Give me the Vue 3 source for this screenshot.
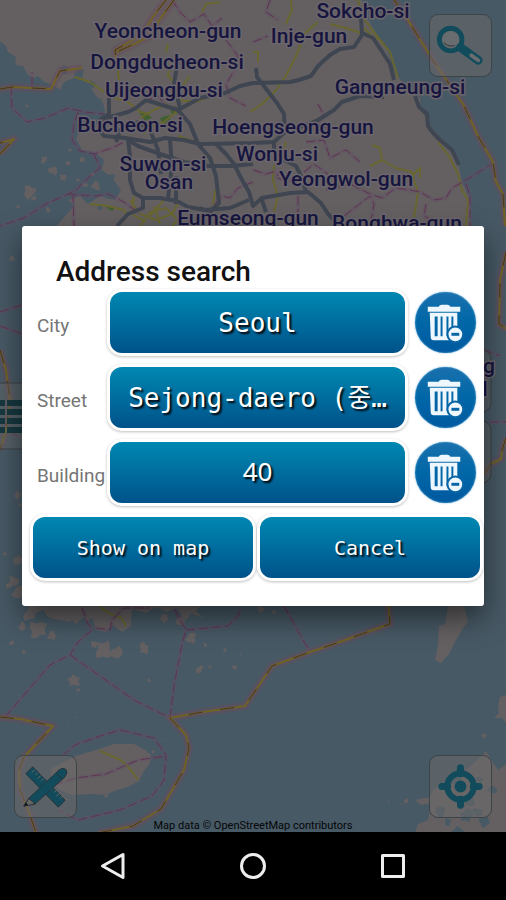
<script setup>
import { reactive } from 'vue'

const fields = reactive([
  { id: 'city', label: 'City', value: 'Seoul' },
  { id: 'street', label: 'Street', value: 'Sejong-daero (중…' },
  { id: 'building', label: 'Building', value: '40', numeric: true }
])

const places = [
  { name: 'Sokcho-si', x: 363, y: 18 },
  { name: 'Yeoncheon-gun', x: 168, y: 38 },
  { name: 'Inje-gun', x: 309, y: 43 },
  { name: 'Dongducheon-si', x: 167, y: 69 },
  { name: 'Uijeongbu-si', x: 164, y: 97 },
  { name: 'Gangneung-si', x: 400, y: 94 },
  { name: 'Bucheon-si', x: 130, y: 132 },
  { name: 'Hoengseong-gun', x: 293, y: 134 },
  { name: 'Wonju-si', x: 277, y: 161 },
  { name: 'Suwon-si', x: 163, y: 171 },
  { name: 'Osan', x: 169, y: 189 },
  { name: 'Yeongwol-gun', x: 346, y: 186 },
  { name: 'Eumseong-gun', x: 248, y: 225 },
  { name: 'Bonghwa-gun', x: 397, y: 230 },
  { name: 'g', x: 489, y: 373 },
  { name: 'l', x: 485, y: 396 }
]

const land = [
  'M0 0H362L367 18L378 36L388 52L395 74L408 88L420 98L421 110L432 128L446 145L458 162L462 182L470 200L470 240H45L60 222L75 205L68 200L80 196L88 204L100 196L115 200L121 190L112 178L102 170L104 160L94 152L82 150L76 139L82 126L97 124L106 116L103 103L96 96L90 86L82 78L84 70L76 68L74 78L64 82L60 90L52 84L44 82L38 76L33 78L27 74L23 66L15 65L16 57L8 52L6 46L0 41Z',
  'M24 600H205L196 611L203 618L190 613L182 616L177 608L166 612L156 607L146 613L132 609L131 626L122 632L113 625L105 632L96 629L92 618L86 622L84 610L76 614L70 622L58 620L48 617L43 610L34 614Z',
  'M52 768L76 756L99 749L114 744L134 744L145 750L151 755L150 763L144 771L139 781L128 787L114 791L106 795L92 794L72 795L60 790L50 782Z',
  'M448 606H464L468 622L463 628L456 640L449 654L441 663L435 660L438 644L439 626L445 624Z',
  'M506 695L500 697L498 706L499 713L494 718L502 718L506 723Z',
  'M506 764L498 770L490 758L486 751L480 757L472 765L462 773L460 783L443 785L434 789L430 797L415 800L421 805L431 803L428 820L418 824L415 833H450L458 826L466 833H506Z'
]

const rocks = [
  [30, 615, 7], [38, 630, 10], [22, 627, 5], [12, 643, 3], [24, 652, 2], [52, 636, 5], [104, 650, 10], [116, 652, 6], [94, 644, 4],
  [144, 648, 6], [165, 618, 5], [180, 622, 5], [191, 638, 6], [190, 612, 4], [186, 615, 6], [199, 670, 5], [210, 667, 2], [235, 668, 3],
  [225, 650, 2], [205, 645, 2], [241, 654, 1], [74, 681, 7], [78, 690, 2], [149, 680, 2], [77, 717, 1], [69, 726, 1], [165, 740, 1],
  [261, 609, 4], [274, 612, 2], [153, 752, 2], [66, 800, 2], [106, 796, 2], [389, 801, 1], [406, 801, 3], [484, 736, 3], [402, 804, 1],
  [27, 106, 2], [44, 160, 4], [53, 170, 5], [63, 177, 4], [68, 163, 3], [78, 180, 2], [30, 192, 7], [34, 198, 3], [85, 185, 3],
  [101, 143, 3], [82, 160, 3], [92, 175, 2], [96, 186, 5], [18, 207, 2], [48, 210, 3], [87, 137, 2], [70, 150, 2], [75, 210, 4],
  [12, 258, 3], [18, 495, 4], [20, 505, 2], [5, 554, 2], [17, 560, 5], [14, 582, 6], [19, 592, 7], [8, 586, 3], [78, 610, 12]
]

const waters = [[65, 70, 5], [92, 84, 4], [97, 101, 5], [110, 178, 5], [108, 192, 6], [88, 197, 5], [471, 803, 6], [461, 806, 4], [477, 812, 5], [466, 815, 7], [485, 822, 6], [493, 790, 5], [440, 812, 6], [448, 822, 4], [480, 780, 4], [100, 208, 3]]

const motorways = [
  'M109 98L109 114L100 120L110 117L128 112L136 108L146 100L178 110L200 98L225 93L240 86L253 83L290 82L299 80L311 76L318 66L330 55L340 49L354 47L362 35L361 18',
  'M362 33L373 38L383 53L390 64L394 80M415 96L419 107L427 114L428 126L434 134L440 140L452 150L459 165',
  'M256 68L257 77L267 90L277 103L284 114L285 132L274 142L253 143L200 144L184 140L165 138L150 142L125 138L104 136L99 130',
  'M285 132L298 128L318 120L334 110L342 102L360 96L384 97',
  'M178 110L190 124L198 144L210 158L216 176L219 203L210 212L200 208',
  'M216 144L226 154L234 164L241 178L249 192L253 206L262 198L290 193L308 192L321 203L328 214L336 222',
  'M253 164L232 166L208 166L184 162L160 154L138 146L128 140L130 156L130 180L134 193L143 198L143 208L128 214L117 226',
  'M143 198L160 198L177 201L188 207L205 210L230 208L249 200M170 140L172 166L168 198M161 174L158 150L150 130L138 122L120 130L116 142',
  'M274 140L274 150L284 160L296 166L302 178L306 192M178 60L174 84L180 108M262 200L266 212M176 176L176 204'
]

const byroads = [
  'M75 77L90 82L104 92M125 62L118 72L119 80M168 44L166 52M170 62L168 76L176 84M190 76L182 86M115 98L128 102L140 112L150 114M140 118L154 110L166 104L176 112L164 122L150 126L144 134M176 100L196 102L206 98M178 136L196 142L200 146M90 204L108 206L124 210L128 216',
  'M130 200L140 214L156 220L172 214L180 200M140 226L150 212L166 208L178 220L172 226M134 196L132 214L146 222M154 206L160 224M164 200L150 216',
  'M291 0L292 10L286 24M318 22L306 32L296 56L286 76L276 90L262 104L250 112M330 24L346 28L364 34L378 40M364 28L372 36M358 0L362 16L372 30L390 52L398 78',
  'M253 52L258 52L258 62M372 145L380 148L382 160L370 166M382 160L396 168L412 172L414 180L418 192L416 206L412 226M274 165L273 180L278 196L274 212M286 142L284 150M412 176L420 168L420 178M438 142L450 158L458 174L462 190L468 200L466 226M202 12L206 4L220 2M215 190L213 206',
  'M100 751L121 760L132 771L138 780M100 607L112 615L122 618L126 626'
]

const districts = [
  'M11 86L12 108L27 122L45 118L68 108L84 112L104 114M32 86L32 72M78 112L74 124L72 140L80 151L94 154L112 148L124 142',
  'M94 154L100 168L88 178L76 190L68 194L46 204L24 218L0 226M68 194L96 196L108 194L124 202L140 214M73 194L74 226',
  'M172 0L180 12L190 22L204 14L212 26L222 18M226 40L238 56L236 68L226 84L230 98L246 106M144 102L158 96L168 108',
  'M270 0L266 12L278 20M253 42L268 36M253 182L238 188L230 198L222 196L208 212M253 170L266 174L280 170L276 178L296 182M318 104L324 116L316 124L332 130M306 142L324 140L330 158L346 150L360 162M304 172L314 164L328 174',
  'M326 190L350 184L370 194L382 198L396 188L410 190L420 192L434 200L446 198L452 188L466 180L492 164M344 216L370 196L374 204L370 226M298 196L298 214M426 204L424 216L436 222M466 184L470 196L470 226',
  'M0 312L22 305M0 326L22 334M10 432L22 438M490 422L506 422M484 350L500 356',
  'M5 717L50 665L70 655L107 681L134 700L170 718M170 718L174 686L182 644L186 630L178 616L174 608M186 630L228 626L238 616L240 608M82 608L88 624L93 629L78 642L70 655M96 628L110 630L112 620L124 608L150 608',
  'M62 756L75 745L100 736L120 730L154 738L166 755L164 780L152 796L120 810L78 820L58 810M54 785L76 778L106 774L138 760L166 756M284 606L294 624L310 652'
]

const borders = [
  'M166 0L155 14L142 34L126 44L115 50L116 60M174 0L158 22L150 36L134 44L117 52M0 89L12 87L51 89L60 71L82 68',
  'M394 0L408 20L434 62L463 104L478 136L493 162L496 182L503 194L505 226',
  'M0 154L14 139L0 143',
  'M506 252L500 280L499 324L506 329M506 438L502 450L501 459L491 464L484 474',
  'M0 350L6 370L10 400L6 430L0 450',
  'M0 717L20 719L53 726L24 757L19 770L20 790L30 815L36 833',
  'M98 833L133 826L161 809L184 770L189 748L186 735L170 718L203 712L245 706L253 694L272 666L310 652L331 645L390 624L388 600'
]

// jagged outline round a centre, stable for the same input
function blob([cx, cy, r]) {
  const points = []
  for (let i = 0; i < 11; i++) {
    const noise = Math.abs(Math.sin(cx * 12.9 + cy * 78.2 + i * 37.7) * 43758.5) % 1
    const angle = (i / 11) * Math.PI * 2
    const radius = r * (0.5 + noise * 0.7)
    points.push(`${(cx + Math.cos(angle) * radius).toFixed(1)},${(cy + Math.sin(angle) * radius).toFixed(1)}`)
  }
  return points.join(' ')
}

function clearField(field) {
  field.value = ''
}
</script>

<template>
  <div class="screen">
    <main class="map">
      <svg class="map__canvas" viewBox="0 0 506 832" preserveAspectRatio="xMidYMid slice" aria-hidden="true">
        <rect class="map__sea" width="506" height="833" />
        <path v-for="(d, i) in land" :key="`land-${i}`" class="map__land" :d="d" />
        <polygon v-for="(rock, i) in rocks" :key="`rock-${i}`" class="map__land" :points="blob(rock)" />
        <polygon v-for="(water, i) in waters" :key="`water-${i}`" class="map__sea" :points="blob(water)" />
        <path class="map__park" d="M138 110l8 3 6 5-7 3zM160 118l9-3 2 6-8 4zM170 108l6-2 2 7-6 2zM105 207l10 1-3 3z" />
        <path v-for="(d, i) in byroads" :key="`byroad-${i}`" class="map__byroad" :d="d" />
        <g v-for="(d, i) in districts" :key="`district-${i}`">
          <path class="map__district-glow" :d="d" />
          <path class="map__district" :d="d" />
        </g>
        <path v-for="(d, i) in motorways" :key="`motorway-${i}`" class="map__motorway" :d="d" />
        <g v-for="(d, i) in borders" :key="`border-${i}`">
          <path class="map__border-glow" :d="d" />
          <path class="map__border" :d="d" />
          <path class="map__border-dash" :d="d" />
        </g>
        <g class="map__tiles">
          <rect x="-30" y="383" width="92" height="66" rx="9" />
          <rect x="429" y="350" width="62" height="62" rx="9" />
          <rect x="429" y="421" width="62" height="62" rx="9" />
        </g>
        <path class="map__grid" d="M0 400h5v6h-5zM7 400h20v6h-20zM0 409h5v6h-5zM7 409h20v6h-20zM0 418h5v6h-5zM7 418h20v6h-20zM0 427h5v6h-5zM7 427h20v6h-20z" />
        <text v-for="place in places" :key="place.name" class="map__place" :x="place.x" :y="place.y">{{ place.name }}</text>
      </svg>

      <button type="button" class="map-button map-button--search" aria-label="Search">
        <svg viewBox="0 0 62 62">
          <circle class="icon-lens" cx="21" cy="25" r="11.500" />
          <path class="icon-handle" d="M31 33L49 46" />
          <path class="icon-slot" d="M42 41L49 46" />
          <path class="icon-shine" d="M14 28q5 5 11 3" />
        </svg>
      </button>
      <button type="button" class="map-button map-button--tools" aria-label="Tools">
        <svg viewBox="0 0 62 62">
          <path class="icon-teal icon-outline" d="M11 18L18 11L51 45L44 52Z" />
          <path class="icon-ticks" d="M20 14l-3 3m6 0l-2 2m5 1l-3 3m6 0l-2 2m5 1l-3 3m10 3l-3 3m6 0l-2 2m5 1l-3 3m6 0l-2 2" />
          <path class="icon-teal icon-outline" d="M14 43L45 14Q49 11 52 14Q54 17 51 21L20 49Z" />
          <path class="icon-tip" d="M14 43L9 51L20 49L18 46L16 45Z" />
          <path class="icon-outline" d="M9 51l2-4 2 3z" />
          <path class="icon-outline" d="M42 17l6 7" />
        </svg>
      </button>
      <button type="button" class="map-button map-button--locate" aria-label="My location">
        <svg viewBox="0 0 62 62">
          <path class="icon-spokes" d="M31 12V18M31 44V50M12 31H18M44 31H50" />
          <circle class="icon-ring" cx="31" cy="31" r="13.500" />
          <circle class="icon-teal" cx="31" cy="31" r="6" />
        </svg>
      </button>

      <form class="dialog" role="dialog" aria-labelledby="dialog-title" @submit.prevent>
        <h1 id="dialog-title" class="dialog__title">Address search</h1>
        <div v-for="field in fields" :key="field.id" class="dialog__row">
          <label class="dialog__label" :for="field.id">{{ field.label }}</label>
          <button :id="field.id" type="button" class="blue-button blue-button--field">
            <span :class="['blue-button__text', { 'blue-button__text--numeric': field.numeric }]">{{ field.value }}</span>
          </button>
          <button type="button" class="clear-button" :aria-label="`Clear ${field.label}`" @click="clearField(field)">
            <svg viewBox="0 0 62 62">
              <path class="trash" d="M13 15H24Q25 13 27 13H33Q35 13 36 15H46V20H13Z" />
              <path class="trash" fill-rule="evenodd" d="M15 21H43V49H19Q16 49 16 46ZM20 25V45H23V25ZM26 25V45H28V25ZM32 25V45H34V25ZM37 25V45H39V25Z" />
              <circle class="trash-badge" cx="41" cy="43" r="8" />
              <path class="trash-minus" d="M37 43h8" />
            </svg>
          </button>
        </div>
        <div class="dialog__actions">
          <button type="submit" class="blue-button">Show on map</button>
          <button type="button" class="blue-button">Cancel</button>
        </div>
      </form>

      <small class="map__credit">Map data © OpenStreetMap contributors</small>
    </main>

    <nav class="navbar">
      <button type="button" aria-label="Back">
        <svg viewBox="0 0 30 30"><path d="M25 3.500V26.500L4.500 15Z" /></svg>
      </button>
      <button type="button" aria-label="Home">
        <svg viewBox="0 0 30 30"><circle cx="15" cy="15" r="11.500" /></svg>
      </button>
      <button type="button" aria-label="Recent apps">
        <svg viewBox="0 0 30 30"><rect x="4.500" y="4.500" width="21" height="21" /></svg>
      </button>
    </nav>
  </div>
</template>

<style>
body {
  background: #000;
}
</style>

<style scoped>
.screen {
  display: flex;
  flex-direction: column;
  min-height: 100vh;
  font-family: Roboto, "Noto Sans CJK KR", sans-serif;
}

button {
  margin: 0;
  padding: 0;
  border: 0;
  background: none;
  cursor: pointer;
}

.map {
  position: relative;
  display: flex;
  flex: 1;
  align-items: center;
  padding: 0 22px;
  overflow: hidden;
}

.map__canvas {
  position: absolute;
  inset: 0;
  width: 100%;
  height: 100%;
}

.map__canvas path {
  stroke-linejoin: round;
}

.map__sea {
  fill: #475965;
}

.map__land {
  fill: #646062;
}

.map__park {
  fill: #3f5f2f;
}

.map__byroad,
.map__motorway,
.map__district,
.map__district-glow,
.map__border,
.map__border-glow,
.map__border-dash {
  fill: none;
}

.map__byroad {
  stroke: #68662f;
  stroke-width: 2;
}

.map__motorway {
  stroke: #3f4651;
  stroke-width: 4;
}

.map__district-glow {
  stroke: #644e66;
  stroke-width: 4;
  opacity: 0.4;
}

.map__district {
  stroke: #5d3450;
  stroke-width: 1;
  stroke-dasharray: 9 4;
}

.map__border-glow {
  stroke: #674b5c;
  stroke-width: 8;
  opacity: 0.5;
}

.map__border {
  stroke: #706225;
  stroke-width: 2;
}

.map__border-dash {
  stroke: #493224;
  stroke-width: 1;
  stroke-dasharray: 14 18;
}

.map__tiles {
  fill: rgba(105, 105, 105, 0.4);
  stroke: #3d4244;
}

.map__grid {
  fill: #173840;
}

.map__place {
  fill: #16153f;
  stroke: #6b656c;
  stroke-width: 3px;
  paint-order: stroke;
  font-size: 21px;
  font-weight: 500;
  text-anchor: middle;
}

.map__credit {
  position: absolute;
  right: 0;
  bottom: 0;
  left: 0;
  color: #050607;
  font-size: 11px;
  line-height: 13px;
  text-align: center;
}

.map-button {
  position: absolute;
  width: 63px;
  height: 63px;
  border: 1px solid #3d4447;
  border-radius: 9px;
  background: rgba(110, 108, 108, 0.5);
}

.map-button svg,
.clear-button svg {
  display: block;
  width: 100%;
  height: 100%;
}

.map-button--search {
  top: 14px;
  right: 14px;
}

.map-button--tools {
  bottom: 14px;
  left: 14px;
}

.map-button--locate {
  right: 14px;
  bottom: 14px;
}

.icon-teal {
  fill: #124b5b;
}

.icon-outline {
  stroke: #28343a;
  stroke-width: 1;
}

.icon-lens,
.icon-ring {
  fill: none;
  stroke: #124b5b;
  stroke-width: 6;
}

.icon-lens {
  fill: rgba(115, 115, 115, 0.6);
  stroke-width: 5;
}

.icon-handle {
  stroke: #124b5b;
  stroke-width: 9;
  stroke-linecap: round;
}

.icon-slot {
  stroke: #6a6d6e;
  stroke-width: 4;
  stroke-linecap: round;
}

.icon-shine,
.icon-ticks {
  fill: none;
  stroke: #293338;
  stroke-width: 1;
}

.icon-ticks {
  stroke: #707070;
}

.icon-tip {
  fill: #646565;
  stroke: #252b2f;
}

.icon-spokes {
  stroke: #124b5b;
  stroke-width: 7;
  stroke-linecap: round;
}

.dialog {
  position: relative;
  display: flex;
  flex: 1;
  flex-direction: column;
  gap: 14px;
  min-width: 0;
  padding: 29px 4px 28px 11px;
  border-radius: 3px;
  background: #fff;
  box-shadow: 0 12px 28px rgba(0, 0, 0, 0.5);
}

.dialog__title {
  margin: 0 0 -10px 23px;
  color: #111;
  font-size: 28px;
  font-weight: 500;
  line-height: 33px;
}

.dialog__row {
  display: flex;
  align-items: center;
  padding: 0 4px;
}

.dialog__label {
  width: 73px;
  padding-top: 6px;
  color: #757575;
  font-size: 19px;
  line-height: 24px;
  white-space: nowrap;
}

.dialog__actions {
  display: flex;
  gap: 7px;
}

.blue-button {
  flex: 1;
  min-width: 0;
  height: 61px;
  padding: 0 10px;
  border-radius: 12px;
  background: linear-gradient(#0088b2, #00528a);
  box-shadow: 0 0 0 3px #fff, 0 1px 3px 3px rgba(0, 0, 0, 0.25);
  color: #fff;
  font-family: "DejaVu Sans Mono", "Noto Sans CJK KR", monospace;
  font-size: 20px;
  text-shadow: 2px 2px 2px #000;
}

.blue-button--field {
  font-size: 26px;
}

.blue-button__text {
  display: block;
  overflow: hidden;
  line-height: 40px;
  text-overflow: ellipsis;
  white-space: nowrap;
}

.blue-button__text--numeric {
  padding-bottom: 4px;
  font-family: "Noto Sans", sans-serif;
}

.clear-button {
  width: 61px;
  height: 61px;
  margin-left: 10px;
  border-radius: 50%;
  background: linear-gradient(#1a70ad, #0067a7 50%, #0059a0);
  box-shadow: inset 0 0 2px #4d9fce, 0 0 2px #69a9d6;
}

.trash,
.trash-badge {
  fill: #eef7fd;
}

.trash-badge {
  stroke: #0865a5;
  stroke-width: 2;
}

.trash-minus {
  stroke: #0865a5;
  stroke-width: 3;
}

.navbar {
  display: flex;
  justify-content: center;
  height: 68px;
  background: #000;
}

.navbar button {
  display: flex;
  align-items: center;
  justify-content: center;
  width: 140px;
}

.navbar svg {
  width: 30px;
  height: 30px;
  fill: none;
  stroke: #eee;
  stroke-width: 3;
  stroke-linejoin: round;
}
</style>
